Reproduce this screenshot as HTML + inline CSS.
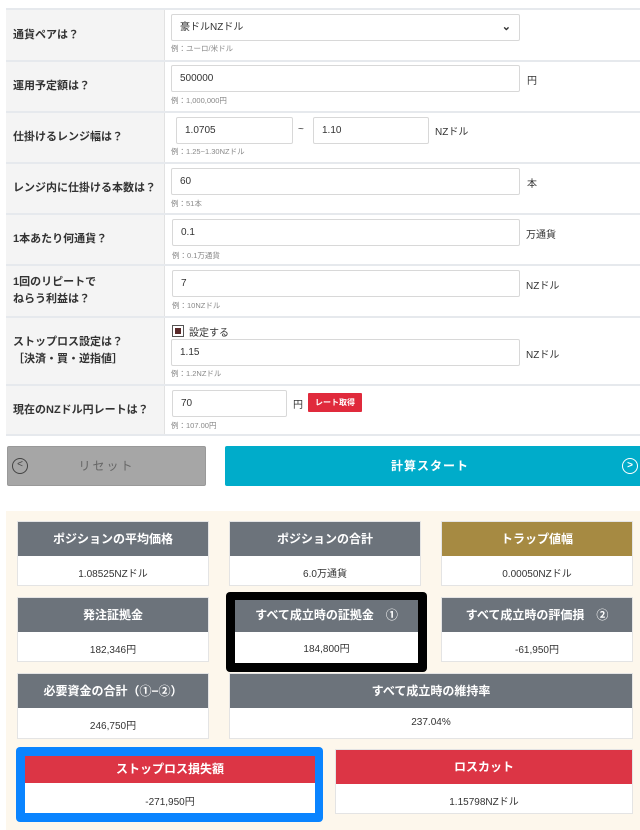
<!DOCTYPE html>
<html><head><meta charset="utf-8"><style>
*{box-sizing:border-box;margin:0;padding:0}
body{width:640px;height:830px;background:#fff;position:relative;overflow:hidden;font-family:"Liberation Sans","Noto Sans CJK JP",sans-serif;color:#333}
.a{position:absolute}
.row{position:absolute;left:6px;width:640px;border-top:2px solid #e6e9ed}
.lab{position:absolute;left:0;top:0;bottom:0;width:159px;background:#f4f4f4;border-right:1px solid #e2e2e2;font-size:11px;font-weight:bold;color:#333;padding-left:7px;display:flex;align-items:center;line-height:17px}
.inp{position:absolute;height:27px;border:1px solid #d8d8d8;border-radius:2px;background:#fff;font-size:10px;padding-left:8px;line-height:25px;color:#333}
.ex{position:absolute;font-size:7.5px;color:#888}
.unit{position:absolute;font-size:10px;color:#333}
.box{position:absolute;background:#fff;border:1px solid #e4e4e4}
.hd{position:absolute;left:0;right:0;top:0;color:#fff;font-weight:bold;font-size:12px;text-align:center}
.vl{position:absolute;left:0;right:0;font-size:10px;text-align:center;color:#333}
</style></head><body>
<div class="row" style="top:8px;height:52px"><div class="lab">通貨ペアは？</div></div>
<div class="inp" style="left:171px;top:14px;width:349px">豪ドルNZドル<span style="position:absolute;right:8px;top:0;font-size:11px;font-weight:bold">&#8964;</span></div>
<div class="ex" style="left:171px;top:43px">例：ユーロ/米ドル</div>

<div class="row" style="top:60px;height:51px"><div class="lab">運用予定額は？</div></div>
<div class="inp" style="left:171px;top:65px;width:349px">500000</div>
<div class="unit" style="left:527px;top:72px">円</div>
<div class="ex" style="left:171px;top:95px">例：1,000,000円</div>

<div class="row" style="top:111px;height:51px"><div class="lab">仕掛けるレンジ幅は？</div></div>
<div class="inp" style="left:176px;top:117px;width:117px">1.0705</div>
<div class="unit" style="left:298px;top:124px">~</div>
<div class="inp" style="left:313px;top:117px;width:116px">1.10</div>
<div class="unit" style="left:435px;top:123px">NZドル</div>
<div class="ex" style="left:171px;top:146px">例：1.25~1.30NZドル</div>

<div class="row" style="top:162px;height:51px"><div class="lab">レンジ内に仕掛ける本数は？</div></div>
<div class="inp" style="left:171px;top:168px;width:349px">60</div>
<div class="unit" style="left:527px;top:175px">本</div>
<div class="ex" style="left:171px;top:198px">例：51本</div>

<div class="row" style="top:213px;height:51px"><div class="lab">1本あたり何通貨？</div></div>
<div class="inp" style="left:172px;top:219px;width:348px">0.1</div>
<div class="unit" style="left:526px;top:226px">万通貨</div>
<div class="ex" style="left:172px;top:250px">例：0.1万通貨</div>

<div class="row" style="top:264px;height:52px"><div class="lab">1回のリピートで<br>ねらう利益は？</div></div>
<div class="inp" style="left:172px;top:270px;width:348px">7</div>
<div class="unit" style="left:526px;top:277px">NZドル</div>
<div class="ex" style="left:172px;top:300px">例：10NZドル</div>

<div class="row" style="top:316px;height:68px"><div class="lab">ストップロス設定は？<br>［決済・買・逆指値］</div></div>
<div class="a" style="left:172px;top:325px;width:12px;height:12px;border:1.5px solid #555;background:#fff"><div style="margin:1.5px;width:6px;height:6px;background:#5a2a2a"></div></div>
<div class="unit" style="left:189px;top:324px">設定する</div>
<div class="inp" style="left:171px;top:339px;width:349px">1.15</div>
<div class="unit" style="left:526px;top:346px">NZドル</div>
<div class="ex" style="left:171px;top:368px">例：1.2NZドル</div>

<div class="row" style="top:384px;height:52px;border-bottom:2px solid #e6e9ed"><div class="lab">現在のNZドル円レートは？</div></div>
<div class="inp" style="left:172px;top:390px;width:115px">70</div>
<div class="unit" style="left:293px;top:396px">円</div>
<div class="a" style="left:308px;top:393px;width:54px;height:19px;background:#e02a3c;color:#fff;font-size:8px;font-weight:bold;text-align:center;line-height:19px;border-radius:1px">レート取得</div>
<div class="ex" style="left:171px;top:420px">例：107.00円</div>

<div class="a" style="left:7px;top:446px;width:199px;height:40px;background:#a6a6a6;border:1px solid #999;border-radius:2px;color:#666;font-size:12px;text-align:center;line-height:38px;letter-spacing:2px">リセット
<div class="a" style="left:4px;top:11px;width:16px;height:16px;border:1.5px solid #444;border-radius:50%;font-size:10px;line-height:12px;letter-spacing:0;color:#444">&lt;</div></div>
<div class="a" style="left:225px;top:446px;width:420px;height:40px;background:#00acca;border-radius:2px;color:#fff;font-size:12px;font-weight:bold;text-align:center;line-height:40px;letter-spacing:1px;padding-right:10px">計算スタート
<div class="a" style="left:397px;top:12px;width:16px;height:16px;border:1.5px solid #fff;border-radius:50%;font-size:10px;line-height:13px;letter-spacing:0">&gt;</div></div>

<div class="a" style="left:6px;top:511px;width:640px;height:319px;background:#fdf7ec"></div>

<div class="box" style="left:17px;top:521px;width:192px;height:65px"><div class="hd" style="height:34px;line-height:34px;background:#6c737b">ポジションの平均価格</div><div class="vl" style="top:43px">1.08525NZドル</div></div>
<div class="box" style="left:229px;top:521px;width:192px;height:65px"><div class="hd" style="height:34px;line-height:34px;background:#6c737b">ポジションの合計</div><div class="vl" style="top:43px">6.0万通貨</div></div>
<div class="box" style="left:441px;top:521px;width:192px;height:65px"><div class="hd" style="height:34px;line-height:34px;background:#a68a42">トラップ値幅</div><div class="vl" style="top:43px">0.00050NZドル</div></div>

<div class="box" style="left:17px;top:597px;width:192px;height:65px"><div class="hd" style="height:34px;line-height:34px;background:#6c737b">発注証拠金</div><div class="vl" style="top:43px">182,346円</div></div>
<div class="a" style="left:226px;top:592px;width:201px;height:80px;background:#000;border-radius:4px"></div>
<div class="box" style="left:235px;top:600px;width:183px;height:63px;border:none"><div class="hd" style="height:32px;line-height:30px;background:#6c737b">すべて成立時の証拠金　①</div><div class="vl" style="top:40px">184,800円</div></div>
<div class="box" style="left:441px;top:597px;width:192px;height:65px"><div class="hd" style="height:34px;line-height:34px;background:#6c737b">すべて成立時の評価損　②</div><div class="vl" style="top:43px">-61,950円</div></div>

<div class="box" style="left:17px;top:673px;width:192px;height:66px"><div class="hd" style="height:34px;line-height:34px;background:#6c737b">必要資金の合計（①−②）</div><div class="vl" style="top:43px">246,750円</div></div>
<div class="box" style="left:229px;top:673px;width:404px;height:66px"><div class="hd" style="height:34px;line-height:34px;background:#6c737b">すべて成立時の維持率</div><div class="vl" style="top:43px">237.04%</div></div>

<div class="a" style="left:16px;top:747px;width:307px;height:75px;background:#0a84ff;border-radius:4px"></div>
<div class="box" style="left:25px;top:756px;width:290px;height:57px;border:none"><div class="hd" style="height:27px;line-height:27px;background:#dc3545">ストップロス損失額</div><div class="vl" style="top:37px">-271,950円</div></div>
<div class="box" style="left:335px;top:749px;width:298px;height:65px"><div class="hd" style="height:34px;line-height:34px;background:#dc3545">ロスカット</div><div class="vl" style="top:43px">1.15798NZドル</div></div>
</body></html>
